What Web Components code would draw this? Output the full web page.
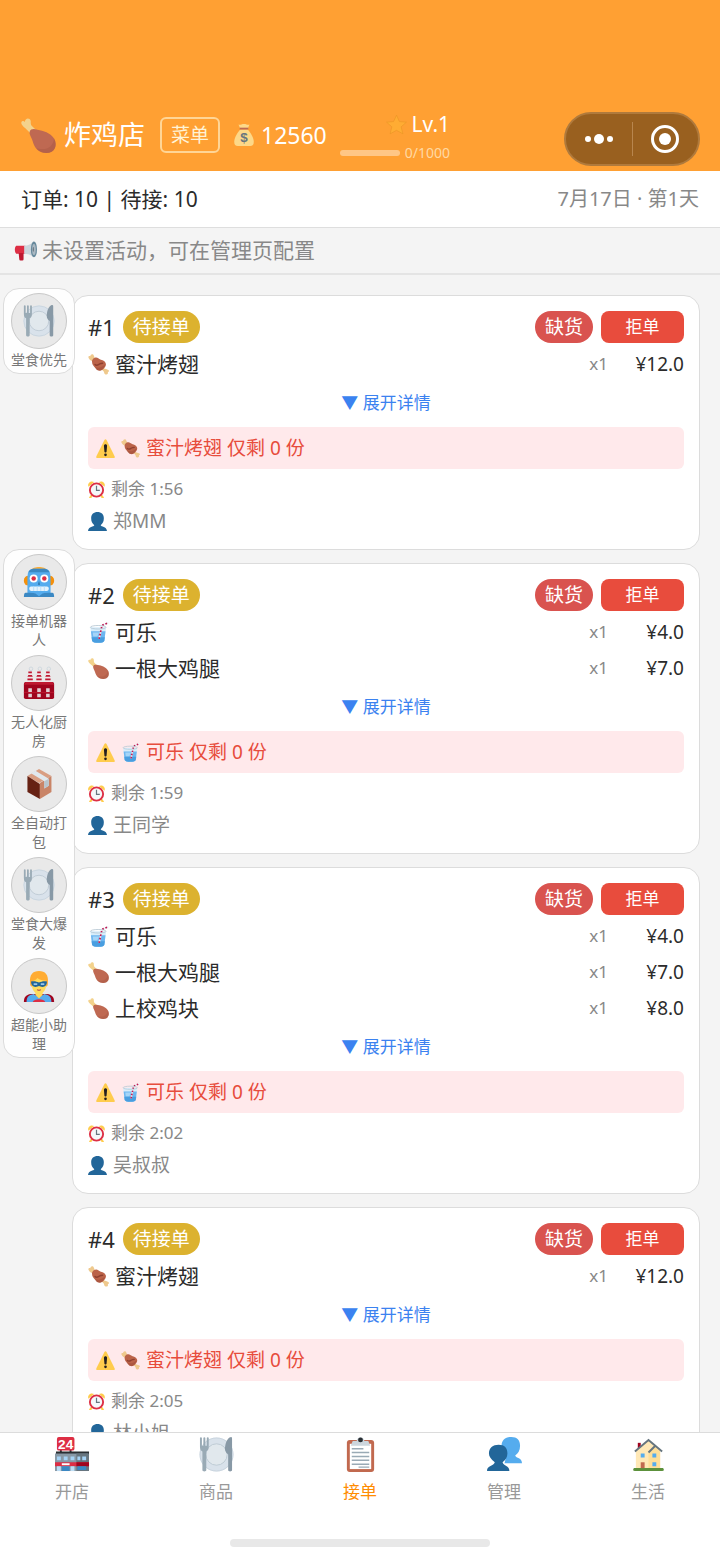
<!DOCTYPE html>
<html lang="zh-CN">
<head>
	<meta charset="utf-8">
	<meta name="viewport" content="width=device-width, initial-scale=1">
	<title>炸鸡店 - 接单</title>
	<style type="text/css">
		body {
			margin: 0;
			background: #f4f4f4;
			color: #2b2b2b;
			font-family: "Noto Sans", "Noto Sans CJK SC", sans-serif;
		}
	</style>
</head>
<body>
	<shop-app>
		<shop-header slot="top" name="炸鸡店" money="12560" level="1" exp="0" max="1000"></shop-header>
		<order-summary slot="top">
			订单: 10 | 待接: 10
			<span slot="date">7月17日 · 第1天</span>
		</order-summary>
		<shop-notice slot="top">未设置活动，可在管理页配置</shop-notice>

		<helper-panel slot="side">
			<helper-button icon="plate">堂食优先</helper-button>
		</helper-panel>
		<helper-panel slot="side">
			<helper-button icon="robot">接单机器人</helper-button>
			<helper-button icon="factory">无人化厨房</helper-button>
			<helper-button icon="box">全自动打包</helper-button>
			<helper-button icon="plate">堂食大爆发</helper-button>
			<helper-button icon="hero">超能小助理</helper-button>
		</helper-panel>

		<order-card no="1" time="1:56" customer="郑MM" lack-icon="meat" lack="蜜汁烤翅">
			<order-item icon="meat" price="12.0">蜜汁烤翅</order-item>
		</order-card>
		<order-card no="2" time="1:59" customer="王同学" lack-icon="cup" lack="可乐">
			<order-item icon="cup" price="4.0">可乐</order-item>
			<order-item icon="leg" price="7.0">一根大鸡腿</order-item>
		</order-card>
		<order-card no="3" time="2:02" customer="吴叔叔" lack-icon="cup" lack="可乐">
			<order-item icon="cup" price="4.0">可乐</order-item>
			<order-item icon="leg" price="7.0">一根大鸡腿</order-item>
			<order-item icon="leg" price="8.0">上校鸡块</order-item>
		</order-card>
		<order-card no="4" time="2:05" customer="林小姐" lack-icon="meat" lack="蜜汁烤翅">
			<order-item icon="meat" price="12.0">蜜汁烤翅</order-item>
		</order-card>

		<tab-bar slot="bottom">
			<tab-item icon="store">开店</tab-item>
			<tab-item icon="plate">商品</tab-item>
			<tab-item icon="clipboard" active>接单</tab-item>
			<tab-item icon="people">管理</tab-item>
			<tab-item icon="house">生活</tab-item>
		</tab-bar>
	</shop-app>

	<script>
	// 所有图标都画在 36x36 的画布上
	const ICONS = {
		leg: `
			<path fill="#f3d28c" d="M1 7C-1 4 2 2 4 4c0-4 5-5 6-1 0 2 0 4 1 5l6 6-4 5-7-7c-2-2-4-3-5-5z"/>
			<path fill="#bf6952" d="M9 14c1-3 4-3 8-2 6 1 13 3 17 9 4 7 1 15-8 15-8 0-12-5-14-12-1-4-4-7-3-10z"/>
			<path fill="#a65440" opacity=".4" d="M34 21c4 7 1 15-8 15-5 0-8-2-10-5 10 3 17-1 18-10z"/>`,
		meat: `
			<path fill="#efc98d" d="M1 7C0 4 2 3 4 4c0-4 5-5 6-1l3 7 15 15c2 1 4 1 6 2 3 1 2 4 0 4 1 3-1 5-4 4-2 0-2-3-3-5L10 13C6 12 3 11 1 7z"/>
			<path fill="#bb6349" d="M7 14C6 10 10 6 14 6c3 0 4 2 8 4 2 1 6 1 8 5 2 3 0 7-3 10s-6 5-10 3c-2-1-3-3-5-5s-5-5-5-9z"/>
			<path fill="none" stroke="#8f402f" stroke-width="2.500" stroke-linecap="round" d="M12 18c3 3 6 0 8-1s3-1 5-1"/>
			<path fill="#9d4c37" opacity=".5" d="M11 21c4 4 12 3 18-3-1 7-6 12-12 10-3-1-5-4-6-7z"/>`,
		bag: `
			<path fill="#fdd888" d="M12 9h12c5 5 10 14 10 20 0 5-2 7-6 7H8c-4 0-6-2-6-7 0-6 5-15 10-20z"/>
			<path fill="#fdd888" d="M9 1c3 1 5-1 9-1s6 2 9 1l-3 7H12z"/>
			<path fill="#bf6952" d="M11 6h14v3H11z"/>
			<text x="18" y="30" text-anchor="middle" font-family="Liberation Sans" font-size="22" font-weight="bold" fill="#67757f">$</text>`,
		star: `
			<path fill="#ffac33" stroke="#e89424" stroke-width="1" d="M18 2l5 11 12 1-9 8 3 12-11-6-11 6 3-12-9-8 12-1z"/>`,
		horn: `
			<path fill="#dd2e44" d="M2 11h15v13H2c-3-2-3-11 0-13z"/>
			<path fill="#be1931" d="M6 23h8v10q0 2-2 2H9q-2 0-2-2z"/>
			<path fill="#ccd6dd" d="M15 11C21 11 27 8 31 4v26c-5-4-10-6-16-6z"/>
			<ellipse cx="31" cy="17" rx="5" ry="13" fill="#66899c"/>
			<ellipse cx="31" cy="17" rx="3" ry="9" fill="#aab8c2"/>
			<ellipse cx="30" cy="17" rx="1" ry="4" fill="#67757f"/>`,
		plate: `
			<circle cx="18" cy="18" r="17.5" fill="#d9e2eb"/>
			<circle cx="18" cy="18" r="17" fill="none" stroke="#c2ced8" stroke-width=".7"/>
			<circle cx="18" cy="18" r="11" fill="#e1e8ed" stroke="#bdcad4" stroke-width="1"/>
			<path fill="#99aab5" d="M1 1c0-1 2-1 2 0v8h1.500V1c0-1 2-1 2 0v8H8V1c0-1 2-1 2 0v9c0 3-1 4-2.500 5v19c0 2-4 2-4 0V15C2 14 1 13 1 10z"/>
			<path fill="#8899a6" d="M34 34c0 2-4 2-4 0V18c-3-2-4-5-3-9 1-6 4-9 6-9 1 0 1 1 1 2z"/>`,
		robot: `
			<rect x="1" y="11" width="34" height="11" rx="5" fill="#f4900c"/>
			<path fill="#ffac33" d="M9 5c2-5 16-5 18 0z"/>
			<path fill="#55acee" d="M5 12Q5 3 12 3h12q7 0 7 9v20H5z"/>
			<path fill="#3b88c3" d="M6 7q2-4 6-4h12q4 0 6 4z"/>
			<path fill="#3b88c3" d="M3 30h30q2 0 2 5H1q0-5 2-5z"/>
			<path fill="#55acee" d="M6 29h24l-8 2-4 3-4-3z"/>
			<circle cx="12" cy="14" r="4.500" fill="#fff"/><circle cx="24" cy="14" r="4.500" fill="#fff"/>
			<circle cx="12" cy="14" r="2.500" fill="#dd2e44"/><circle cx="24" cy="14" r="2.500" fill="#dd2e44"/>
			<rect x="7" y="23" width="22" height="5" rx="2" fill="#e6f3fc"/>
			<path stroke="#b5dcf9" d="M12 23v5M16 23v5M20 23v5M24 23v5"/>
			<path fill="#269" d="M18 17l1 4h-2z"/>`,
		factory: `
			<path fill="#f1e4e8" d="M6 4h4l1 15H5zM16 4h4l1 15h-6zM26 4h4l1 15h-6z"/>
			<path fill="#be1931" d="M6 5h4v2H6zM6 9h4l1 2H5zM5 13h6v2H5zM16 5h4v2h-4zM16 9h4l1 2h-6zM15 13h6v2h-6zM26 5h4v2h-4zM26 9h4l1 2h-6zM25 13h6v2h-6z"/>
			<g fill="none" stroke="#ccd6dd"><circle cx="9" cy="2" r="2"/><circle cx="19" cy="2" r="2"/><circle cx="29" cy="2" r="2"/></g>
			<rect x="1" y="17" width="34" height="19" rx="2" fill="#a0041e"/>
			<path fill="#be1931" d="M3 17h30l2 3H1z"/>
			<path fill="#be1931" d="M1 28h34v1H1z"/>
			<path fill="#e1cfd4" d="M6 24h4v4H6zM16 24h4v4h-4zM26 24h4v4h-4zM6 30h4v4H6zM16 30h4v4h-4zM26 30h4v4h-4z"/>`,
		box: `
			<path fill="#d99e82" d="M18 1l14 8-14 8L5 9z"/>
			<path fill="#662113" d="M5 9l14 9v17L5 27z"/>
			<path fill="#c98467" d="M19 17l13-8v18l-13 8z"/>
			<path fill="#e1e8ed" d="M9 6l5-3 15 9v8l-5 3v-8z"/>
			<path fill="#b8c5ce" d="M24 15l5-3v8l-5 3z"/>`,
		hero: `
			<path fill="#a0041e" d="M1 36c0-7 4-9 10-9h14c6 0 10 2 10 9z"/>
			<path fill="#55acee" d="M4 36c0-6 3-8 8-9l6 4 6-4c5 1 8 3 8 9z"/>
			<path fill="#ffdc5d" d="M14 24h8v4l-4 4-4-4z"/>
			<path fill="#dd2e44" d="M11 36c1-4 13-4 14 0z"/>
			<path fill="#ffac33" d="M8 15C7 5 11 1 18 1s11 4 10 14c0 3-1 4-3 4H11c-2 0-3-1-3-4z"/>
			<path fill="#ffdc5d" d="M10 13c3-1 5-2 6-4 3 2 6 3 10 3v5c0 5-3 10-8 10s-8-5-8-10z"/>
			<path fill="#226699" d="M9 13c4-1 6 0 9 1 3-1 5-2 9-1 0 4-2 6-5 6-2 0-3-1-4-1s-2 1-4 1c-3 0-5-2-5-6z"/>
			<path fill="#9ac7e8" d="M12 15h4v2h-4zM20 15h4v2h-4z"/>
			<path fill="none" stroke="#c1694f" stroke-width="1.500" d="M16 22q2 2 4 0"/>`,
		cup: `
			<path fill="#d7edfb" d="M4 9h27l-3 23c-1 5-20 5-21 0z"/>
			<path fill="#6db6f0" d="M5 16h25l-2 16c-1 5-20 5-21 0z"/>
			<path fill="#3b94d9" opacity=".7" d="M6 26h23l-1 6c-1 5-20 5-21 0z"/>
			<path fill="#a5d5f8" d="M8 18h11l-3 7H9z"/>
			<path fill="none" stroke="#eff4f8" stroke-width="3" d="M19 29l5-23 11-5"/>
			<path fill="none" stroke="#be1953" stroke-width="3" stroke-dasharray="3 3" d="M19 29l5-23 11-5"/>
			<ellipse cx="17.500" cy="9" rx="13.500" ry="3" fill="none" stroke="#b8c8d3" stroke-width="1.500"/>`,
		warn: `
			<path fill="#ffcc4d" d="M3 36c-3 0-3-2-2-4L16 2c1-2 3-2 4 0l15 30c1 2 1 4-2 4z"/>
			<path fill="#231f20" d="M15 13c0-4 6-4 6 0l-1 11c0 2-4 2-4 0z"/>
			<circle cx="18" cy="30" r="2.500" fill="#231f20"/>`,
		clock: `
			<path fill="#ffcc4d" d="M1 12C-2 5 5-2 13 2zM35 12C38 5 31-2 23 2zM5 30h6l-4 6H2zM25 30h6l3 6h-5z"/>
			<circle cx="18" cy="19" r="16" fill="#dd2e44"/>
			<circle cx="18" cy="19" r="12" fill="#f5f8fa"/>
			<path fill="none" stroke="#66757f" stroke-width="2.500" d="M18 10v10h7"/>`,
		person: `
			<path fill="#226699" d="M12 25c-4-3-6-7-6-13C6 4 11 0 18 0s12 4 12 12c0 6-2 10-6 13 1 3 11 2 12 11H0c1-9 11-8 12-11z"/>`,
		people: `
			<path fill="#55acee" d="M20 19c-3-3-5-6-5-10 0-6 4-9 10-9s9 3 9 9c0 5-2 8-5 10 1 3 7 2 7 8H18z"/>
			<path fill="#226699" d="M8 26c-4-3-6-6-6-9 0-6 4-9 10-9s9 3 9 9c0 4-2 7-5 9 1 4 7 3 7 9H0c0-6 7-5 8-9z"/>`,
		store: `
			<path fill="#292f33" d="M5 12h2v5H5zM15 12h2v5h-2zM1 15h34v4H1z"/>
			<rect x="0" y="17" width="34" height="18" fill="#8899a6"/>
			<path fill="#66757f" d="M22 17h13v18H22z"/>
			<path fill="#a5d3f6" d="M2 20h4v4H2zM9 20h4v4H9zM16 20h4v4h-4zM23 20h3v4h-3zM28 20h4v4h-4z"/>
			<path fill="#dd2e44" d="M0 26h35v4H0z"/>
			<path fill="#a0041e" d="M22 26h13v4H22z"/>
			<path fill="#fff" d="M7 27h8v2H7z"/>
			<path fill="#bbddf5" d="M2 30h4v5H2zM16 30h4v5h-4z"/>
			<path fill="#3b88c3" d="M7 30h8v5H7zM23 30h9v4h-9z"/>
			<rect x="2" y="0" width="18" height="14" rx="2" fill="#dd2e44"/>
			<text x="11" y="12" text-anchor="middle" font-family="Liberation Sans" font-size="14" font-weight="bold" fill="#fff">24</text>`,
		clipboard: `
			<rect x="4" y="3" width="28" height="33" rx="3" fill="#c1694f"/>
			<path fill="#fff" d="M7 7h22v26H7z"/>
			<path stroke="#99aab5" stroke-width="1.500" d="M9 12h12M9 16h18M9 20h18M9 24h18M9 28h18M16 31h11"/>
			<path fill="#ccd6dd" d="M10 4h4c1-5 7-5 8 0h4l2 5H8z"/>
			<circle cx="18" cy="3" r="2.500" fill="#292f33"/>`,
		house: `
			<path fill="#a0041e" d="M7 6h3v8H7z"/>
			<path fill="#ffe8b6" d="M5 14L18 3l12 11v19H5z"/>
			<path fill="#ffd983" d="M18 15l6-5 6 5v18H18z" opacity=".6"/>
			<path fill="none" stroke="#66757f" stroke-width="2" d="M4 15L18 3l14 12M18 16l7-7"/>
			<path fill="#5c913b" d="M3 32h30q2 3-1 3H4q-3 0-1-3z"/>
			<path fill="#55acee" d="M10 17h4v4h-4zM22 17h4v4h-4zM22 26h4v4h-4z"/>
			<path fill="#c1694f" d="M10 26h4v6h-4z"/>`
	};

	customElements.define('emoji-icon', class extends HTMLElement {
		connectedCallback() {
			this.attachShadow({mode: 'open'});
			this.shadowRoot.innerHTML = `
				<style>
					:host {
						display: block;
						flex: none;
						width: var(--size, 19px);
						height: var(--size, 19px);
					}
					svg {
						display: block;
						width: 100%;
						height: 100%;
						overflow: visible;
					}
				</style>
				<svg viewBox="0 0 36 36" aria-hidden="true">${ICONS[this.getAttribute('name')]}</svg>
			`;
		}
	});

	customElements.define('shop-app', class extends HTMLElement {
		connectedCallback() {
			this.attachShadow({mode: 'open'});
			this.shadowRoot.innerHTML = `
				<style>
					:host {
						display: flex;
						flex-direction: column;
						height: 100vh;
					}
					main {
						flex: 1;
						min-height: 0;
						display: grid;
						grid-template-columns: 72px minmax(0, 1fr);
						align-items: start;
						overflow-y: auto;
						scrollbar-width: none;
					}
					/* 侧栏面板略微压住订单卡片 */
					aside {
						display: flex;
						flex-direction: column;
						gap: 175px;
						padding: 13px 0 0 3px;
						z-index: 1;
					}
					.orders {
						display: flex;
						flex-direction: column;
						gap: 13px;
						padding: 20px 20px 20px 0;
					}
				</style>
				<slot name="top"></slot>
				<main>
					<aside><slot name="side"></slot></aside>
					<div class="orders"><slot></slot></div>
				</main>
				<slot name="bottom"></slot>
			`;
		}
	});

	customElements.define('shop-header', class extends HTMLElement {
		connectedCallback() {
			const get = name => this.getAttribute(name);
			this.attachShadow({mode: 'open'});
			this.shadowRoot.innerHTML = `
				<style>
					:host {
						display: flex;
						align-items: flex-start;
						padding: 112px 20px 5px 21px;
						background: #ffa033;
						color: #fff;
					}
					.shop, .money {
						display: flex;
						align-items: center;
						height: 46px;
						white-space: nowrap;
					}
					.shop { gap: 8px; --size: 35px; }
					h1 {
						margin: 0;
						font-size: 27px;
						font-weight: 400;
						line-height: 36px;
					}
					.menu {
						margin: 0 13px 0 7px;
						width: 60px;
						height: 36px;
						padding: 0;
						border: 2px solid #ffd596;
						border-radius: 6px;
						background: none;
						color: #fff3d6;
						font: inherit;
						font-size: 19px;
						line-height: 32px;
					}
					.money {
						gap: 6px;
						margin-right: 13px;
						font-size: 23px;
						line-height: 32px;
						--size: 22px;
					}
					.level {
						display: flex;
						flex-direction: column;
						align-items: flex-end;
						gap: 8px;
					}
					.level div {
						display: flex;
						align-items: center;
						gap: 5px;
					}
					.lv { font-size: 21px; line-height: 24px; --size: 21px; }
					.exp { font-size: 14px; line-height: 18px; color: #ffd9a3; }
					progress {
						appearance: none;
						width: 60px;
						height: 6px;
						border: 0;
					}
					progress::-webkit-progress-bar { background: #ffc685; border-radius: 3px; }
					progress::-webkit-progress-value { background: #fff; border-radius: 3px; }
					.capsule {
						display: flex;
						align-items: center;
						box-sizing: border-box;
						width: 136px;
						height: 54px;
						margin-left: auto;
						border: 2px solid #b07a3c;
						border-radius: 27px;
						background: #99601f;
					}
					.capsule button {
						flex: 1;
						display: flex;
						justify-content: center;
						padding: 0;
						border: 0;
						background: none;
					}
					.capsule button + button { border-left: 1px solid #b8864e; padding: 3px 0; }
				</style>
				<div class="shop">
					<emoji-icon name="leg"></emoji-icon>
					<h1>${get('name')}</h1>
					<button class="menu">菜单</button>
				</div>
				<div class="money"><emoji-icon name="bag"></emoji-icon>${get('money')}</div>
				<div class="level">
					<div class="lv"><emoji-icon name="star"></emoji-icon>Lv.${get('level')}</div>
					<div class="exp">
						<progress aria-label="经验" value="${get('exp')}" max="${get('max')}"></progress>
						${get('exp')}/${get('max')}
					</div>
				</div>
				<div class="capsule">
					<button aria-label="更多">
						<svg width="30" height="28" fill="#fff"><circle cx="4" cy="14" r="3"/><circle cx="15" cy="14" r="5"/><circle cx="26" cy="14" r="3"/></svg>
					</button>
					<button aria-label="关闭">
						<svg width="28" height="28"><circle cx="14" cy="14" r="12.500" fill="none" stroke="#fff" stroke-width="3"/><circle cx="14" cy="14" r="6" fill="#fff"/></svg>
					</button>
				</div>
			`;
		}
	});

	customElements.define('order-summary', class extends HTMLElement {
		connectedCallback() {
			this.attachShadow({mode: 'open'});
			this.shadowRoot.innerHTML = `
				<style>
					:host {
						display: flex;
						justify-content: space-between;
						padding: 12px 21px;
						border-bottom: 1px solid #dedede;
						background: #fff;
						font-size: 21px;
						line-height: 32px;
					}
					.date { font-size: 20px; color: #888; }
				</style>
				<div><slot></slot></div>
				<div class="date"><slot name="date"></slot></div>
			`;
		}
	});

	customElements.define('shop-notice', class extends HTMLElement {
		connectedCallback() {
			this.attachShadow({mode: 'open'});
			this.shadowRoot.innerHTML = `
				<style>
					:host {
						display: flex;
						align-items: center;
						gap: 5px;
						padding: 6px 15px 7px;
						border-bottom: 2px solid #e4e4e4;
						font-size: 21px;
						line-height: 32px;
						color: #888;
						--size: 22px;
					}
				</style>
				<emoji-icon name="horn"></emoji-icon>
				<div><slot></slot></div>
			`;
		}
	});

	customElements.define('helper-panel', class extends HTMLElement {
		connectedCallback() {
			this.attachShadow({mode: 'open'});
			this.shadowRoot.innerHTML = `
				<style>
					:host {
						display: flex;
						flex-direction: column;
						align-items: center;
						gap: 6px;
						box-sizing: border-box;
						width: 72px;
						padding: 4px 0;
						border: 1px solid #dcdcdc;
						border-radius: 16px;
						background: rgba(255, 255, 255, .9);
					}
				</style>
				<slot></slot>
			`;
		}
	});

	customElements.define('helper-button', class extends HTMLElement {
		connectedCallback() {
			this.attachShadow({mode: 'open'});
			this.shadowRoot.innerHTML = `
				<style>
					:host { display: block; }
					button {
						display: flex;
						flex-direction: column;
						align-items: center;
						gap: 1px;
						width: 56px;
						padding: 0;
						border: 0;
						background: none;
						color: #777;
						font: inherit;
						font-size: 14px;
						line-height: 19px;
						--size: 32px;
					}
					.circle {
						display: grid;
						place-items: center;
						box-sizing: border-box;
						width: 56px;
						height: 56px;
						border: 1px solid #c8c8c8;
						border-radius: 50%;
						background: #e9e9e9;
					}
				</style>
				<button>
					<span class="circle"><emoji-icon name="${this.getAttribute('icon')}"></emoji-icon></span>
					<span><slot></slot></span>
				</button>
			`;
		}
	});

	customElements.define('order-item', class extends HTMLElement {
		connectedCallback() {
			this.attachShadow({mode: 'open'});
			this.shadowRoot.innerHTML = `
				<style>
					:host {
						display: flex;
						align-items: center;
						gap: 6px;
						font-size: 21px;
						line-height: 36px;
						--size: 21px;
					}
					.name { flex: 1; }
					.qty { font-size: 17px; color: #888; }
					.price { width: 70px; font-size: 19px; text-align: right; }
				</style>
				<emoji-icon name="${this.getAttribute('icon')}"></emoji-icon>
				<span class="name"><slot></slot></span>
				<span class="qty">x1</span>
				<span class="price">¥${this.getAttribute('price')}</span>
			`;
		}
	});

	customElements.define('order-card', class extends HTMLElement {
		connectedCallback() {
			const get = name => this.getAttribute(name);
			this.attachShadow({mode: 'open'});
			this.shadowRoot.innerHTML = `
				<style>
					:host {
						display: block;
						padding: 15px 15px 12px;
						border: 1px solid #dcdcdc;
						border-radius: 16px;
						background: #fff;
					}
					header {
						display: flex;
						align-items: center;
						gap: 8px;
						margin-bottom: 3px;
						line-height: 32px;
					}
					h2 {
						margin: 0;
						font-size: 22px;
						font-weight: 400;
					}
					.tag {
						padding: 0 10px;
						border-radius: 16px;
						color: #fff;
						font-size: 19px;
					}
					.wait { background: #dcb22f; }
					.lack { margin-left: auto; background: #d9534f; }
					button {
						padding: 0;
						border: 0;
						font: inherit;
						font-size: 17px;
					}
					.reject {
						width: 83px;
						height: 32px;
						border-radius: 8px;
						background: #e84c3d;
						color: #fff;
					}
					.more {
						display: block;
						width: 100%;
						margin-bottom: 3px;
						background: none;
						color: #3b82f0;
						line-height: 42px;
					}
					.warning, .line {
						display: flex;
						align-items: center;
						gap: 6px;
						font-size: 19px;
						line-height: 32px;
					}
					.warning {
						margin-bottom: 4px;
						padding: 5px 8px;
						border-radius: 6px;
						background: #ffe9eb;
						color: #e74c3c;
					}
					.line { color: #888; }
					.time { font-size: 17px; --size: 17px; }
				</style>
				<header>
					<h2>#${get('no')}</h2>
					<span class="tag wait">待接单</span>
					<span class="tag lack">缺货</span>
					<button class="reject">拒单</button>
				</header>
				<slot></slot>
				<button class="more">▼ 展开详情</button>
				<div class="warning">
					<emoji-icon name="warn"></emoji-icon>
					<emoji-icon name="${get('lack-icon')}"></emoji-icon>
					<span>${get('lack')} 仅剩 0 份</span>
				</div>
				<div class="line time"><emoji-icon name="clock"></emoji-icon><span>剩余 ${get('time')}</span></div>
				<div class="line"><emoji-icon name="person"></emoji-icon><span>${get('customer')}</span></div>
			`;
		}
	});

	customElements.define('tab-bar', class extends HTMLElement {
		connectedCallback() {
			this.attachShadow({mode: 'open'});
			this.shadowRoot.innerHTML = `
				<style>
					:host {
						display: block;
						border-top: 1px solid #dcdcdc;
						background: #fff;
					}
					nav {
						display: grid;
						grid-template-columns: repeat(5, 1fr);
						padding-top: 4px;
					}
					/* 系统底部横条 */
					.home {
						width: 36%;
						height: 8px;
						margin: 35px auto 14px;
						border-radius: 4px;
						background: #e8e8e8;
					}
				</style>
				<nav><slot></slot></nav>
				<div class="home"></div>
			`;
		}
	});

	customElements.define('tab-item', class extends HTMLElement {
		connectedCallback() {
			this.attachShadow({mode: 'open'});
			this.shadowRoot.innerHTML = `
				<style>
					:host { display: block; color: #999; }
					:host([active]) { color: #ff8c00; }
					a {
						display: flex;
						flex-direction: column;
						align-items: center;
						gap: 8px;
						color: inherit;
						font-size: 17px;
						line-height: 24px;
						text-decoration: none;
						--size: 35px;
					}
				</style>
				<a href="#"><emoji-icon name="${this.getAttribute('icon')}"></emoji-icon><span><slot></slot></span></a>
			`;
		}
	});
	</script>
</body>
</html>
